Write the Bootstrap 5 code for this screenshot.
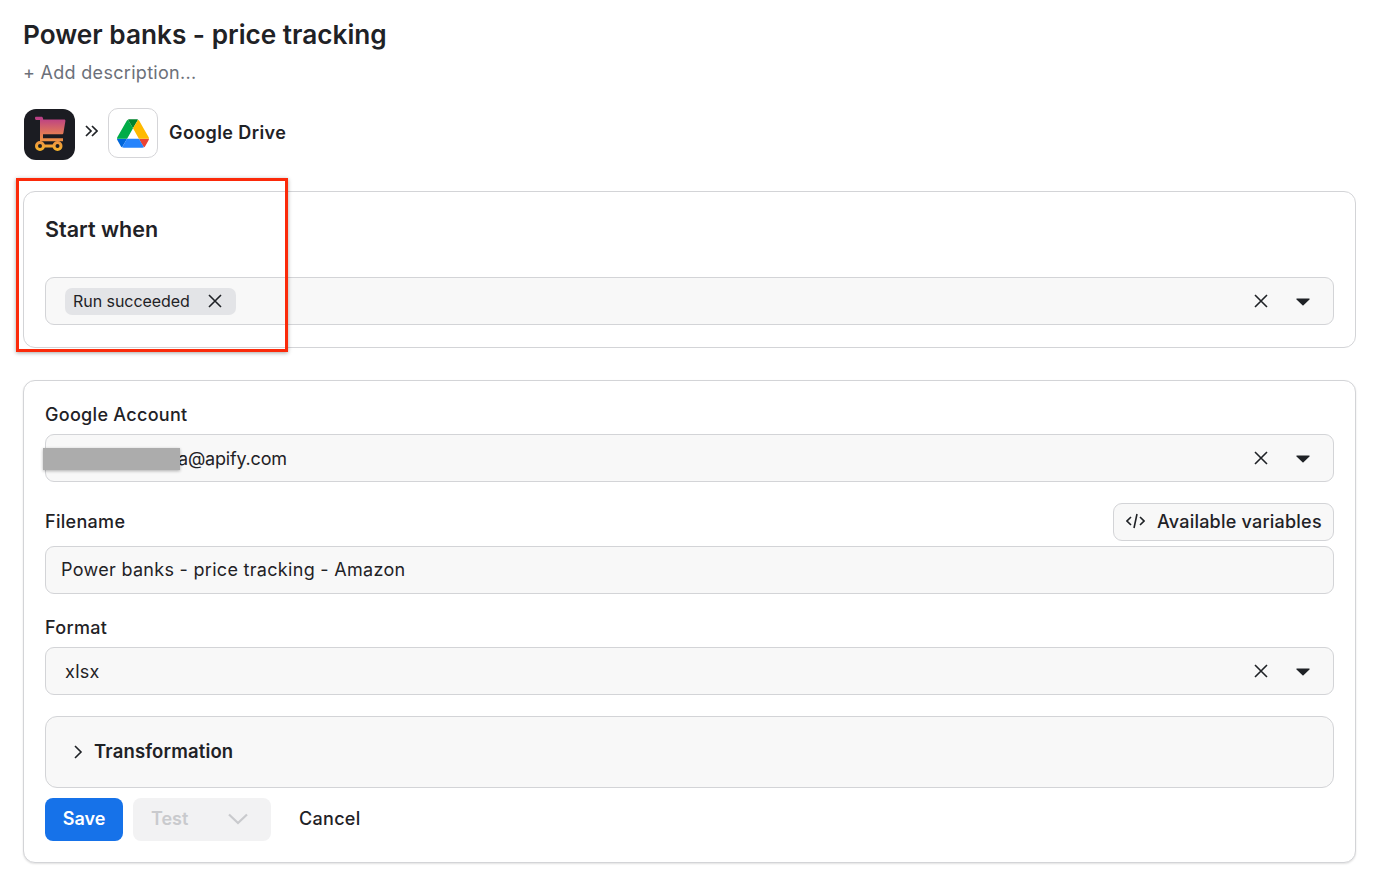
<!DOCTYPE html>
<html lang="en">
<head>
    <meta charset="UTF-8">
    <meta name="viewport" content="width=device-width, initial-scale=1.0">
    <link href="https://cdn.jsdelivr.net/npm/bootstrap@5.3.0/dist/css/bootstrap.min.css" rel="stylesheet">
    <style>
        body {
            font-family: Inter, "Liberation Sans", sans-serif;
            color: #1f2226;
            background: #fff;
        }
        .page-wrap {
            position: relative;
            width: 1378px;
            height: 894px;
            overflow: hidden;
            padding: 0 22px 0 23px;
        }
        .page-title {
            font-size: 26.2px;
            font-weight: 600;
            line-height: 36px;
            margin: 0;
            padding-top: 17px;
        }
        .add-desc {
            font-size: 18px;
            letter-spacing: .3px;
            line-height: 24px;
            color: #6c7079;
            margin-top: 8px;
        }
        .app-row {
            margin-top: 23px;
            height: 52px;
        }
        .app-tile {
            width: 51px;
            height: 51px;
            margin: 1px 0 0 1px;
            border-radius: 12px;
            background: #1b1c22;
        }
        .drive-tile {
            width: 50px;
            height: 50px;
            margin-top: -2px;
            border-radius: 10px;
            border: 1px solid #d5d5d8;
            background: #fff;
        }
        .arrows {
            width: 33px;
            margin-top: -10px;
        }
        .app-name {
            font-size: 18px;
            font-weight: 600;
            letter-spacing: .4px;
            margin: -4px 0 0 11px;
        }
        .form-panel {
            border: 1px solid #d3d4d7;
            border-radius: 12px;
            padding: 0 21px;
            background: #fff;
        }
        .panel-start {
            margin-top: 31px;
            height: 157px;
        }
        .panel-main {
            margin-top: 32px;
            height: 483px;
            box-shadow: 0 1px 2px rgba(0, 0, 0, .12);
        }
        .start-title {
            font-size: 21.5px;
            font-weight: 600;
            line-height: 28px;
            margin: 0;
            padding-top: 23px;
            margin-bottom: 34px;
        }
        .field-box {
            height: 48px;
            border: 1px solid #d3d4d7;
            border-radius: 9px;
            background: #f8f8f8;
            font-size: 18px;
            letter-spacing: .3px;
            padding: 0 23px 0 19px;
        }
        .field-plain {
            padding-left: 15px;
            padding-bottom: 2px;
        }
        .chip-tag {
            height: 27px;
            border-radius: 7px;
            background: #e3e4e7;
            font-size: 16px;
            letter-spacing: -.05px;
            padding: 0 14px 0 8px;
            gap: 18px;
        }
        .account-text {
            margin-left: 113px;
            letter-spacing: -.2px;
        }
        .field-label {
            font-size: 18px;
            font-weight: 500;
            letter-spacing: .3px;
            line-height: 24px;
        }
        .label-account { padding-top: 22px; margin-bottom: 7px; }
        .label-file { height: 38px; margin-top: 21px; margin-bottom: 5px; }
        .label-format { margin-top: 22px; margin-bottom: 7px; }
        .vars-btn {
            height: 38px;
            width: 221px;
            border: 1px solid #d3d4d7;
            border-radius: 9px;
            background: #f8f8f8;
            font-size: 18px;
            font-weight: 500;
            letter-spacing: .22px;
            color: #1f2226;
            padding: 0 0 2px 12px;
            gap: 12px;
        }
        .transform-box {
            height: 72px;
            margin-top: 21px;
            border: 1px solid #d3d4d7;
            border-radius: 12px;
            background: #f8f8f8;
            padding-left: 27px;
            font-size: 18.5px;
            font-weight: 600;
            letter-spacing: .15px;
            gap: 11px;
        }
        .action-row {
            margin-top: 10px;
            gap: 10px;
        }
        .save-btn {
            width: 78px;
            height: 43px;
            border-radius: 8px;
            background: #1672e9;
            border: 0;
            color: #fff;
            font-size: 18px;
            font-weight: 600;
            padding: 0 0 3px;
        }
        .test-btn {
            width: 138px;
            height: 43px;
            border-radius: 8px;
            background: #f2f2f3;
            color: #c9cacd;
            font-size: 18px;
            font-weight: 600;
            padding: 0 23px 2px 18px;
        }
        .cancel-btn {
            font-size: 18px;
            font-weight: 500;
            letter-spacing: .3px;
            color: #1f2226;
            margin-left: 18px;
            padding-bottom: 3px;
        }
        .caret-icon {
            margin-left: 28px;
            margin-top: 2px;
        }
        .red-frame {
            position: absolute;
            left: 16px;
            top: 178px;
            width: 272px;
            height: 174px;
            border: 3px solid #fb2a0a;
            box-shadow: 0 1px 4px rgba(0, 0, 0, .35);
            pointer-events: none;
        }
        .redact-bar {
            position: absolute;
            left: 43px;
            top: 448px;
            width: 137px;
            height: 22px;
            background: #acacac;
            box-shadow: 0 1px 3px rgba(0, 0, 0, .3);
        }
    </style>
</head>
<body>
    <div class="page-wrap">
        <h1 class="page-title">Power banks - price tracking</h1>
        <div class="add-desc">+ Add description...</div>

        <div class="app-row d-flex align-items-center">
            <div class="app-tile">
                <svg width="51" height="51" viewBox="0 0 51 51" class="d-block">
                    <defs>
                        <linearGradient id="cartGrad" gradientUnits="userSpaceOnUse" x1="0" y1="9" x2="0" y2="42">
                            <stop offset="0" stop-color="#bb3f87"/>
                            <stop offset="0.55" stop-color="#e8824f"/>
                            <stop offset="1" stop-color="#f6b52a"/>
                        </linearGradient>
                    </defs>
                    <path d="M11 9c0-.8.5-1.300 1.300-1.300h5c.8 0 1.400.5 1.600 1.300l.3 1.500h21c.8 0 1.300.6 1.200 1.400l-2 12.100c-.1.8-.7 1.300-1.500 1.300H19v4h20v3H16V11h-3.700c-.8 0-1.300-.8-1.300-2z" fill="url(#cartGrad)"/>
                    <circle cx="16" cy="37" r="3.500" fill="none" stroke="url(#cartGrad)" stroke-width="3"/>
                    <circle cx="33.500" cy="37" r="3.500" fill="none" stroke="url(#cartGrad)" stroke-width="3"/>
                    <path d="M20 35.500h10v3H20z" fill="url(#cartGrad)"/>
                </svg>
            </div>
            <div class="arrows text-center">
                <svg width="13" height="12" viewBox="0 0 13 12" fill="none" stroke="#1f2226" stroke-width="1.700">
                    <path d="M1 1l5 5-5 5M7 1l5 5-5 5"/>
                </svg>
            </div>
            <div class="drive-tile d-flex align-items-center justify-content-center">
                <svg width="32" height="29" viewBox="0 0 87.300 78">
                    <path d="m6.600 66.850 3.850 6.650c.8 1.400 1.950 2.500 3.300 3.300l13.750-23.800h-27.500c0 1.550.4 3.100 1.200 4.500z" fill="#0066da"/>
                    <path d="m43.650 25-13.750-23.800c-1.350.8-2.500 1.900-3.300 3.300l-25.400 44a9.060 9.060 0 0 0 -1.200 4.500h27.500z" fill="#00ac47"/>
                    <path d="m73.550 76.800c1.350-.8 2.500-1.900 3.300-3.300l1.600-2.750 7.650-13.250c.8-1.400 1.200-2.950 1.200-4.500h-27.502l5.852 11.500z" fill="#ea4335"/>
                    <path d="m43.650 25 13.750-23.800c-1.350-.8-2.900-1.200-4.500-1.200h-18.500c-1.600 0-3.150.45-4.500 1.200z" fill="#00832d"/>
                    <path d="m59.800 53h-32.300l-13.750 23.800c1.350.8 2.900 1.200 4.500 1.200h50.800c1.600 0 3.150-.45 4.500-1.200z" fill="#2684fc"/>
                    <path d="m73.400 26.500-12.700-22c-.8-1.400-1.950-2.500-3.300-3.300l-13.750 23.800 16.150 28h27.450c0-1.550-.4-3.100-1.200-4.500z" fill="#ffba00"/>
                </svg>
            </div>
            <div class="app-name">Google Drive</div>
        </div>

        <section class="form-panel panel-start">
            <h2 class="start-title">Start when</h2>
            <div class="field-box d-flex align-items-center justify-content-between">
                <div class="chip-tag d-inline-flex align-items-center">
                    <span>Run succeeded</span>
                    <svg width="14" height="14" viewBox="0 0 14 14" stroke="#1f2226" stroke-width="1.600"><path d="M1 1l12 12M13 1L1 13"/></svg>
                </div>
                <div class="d-flex align-items-center field-icons"></div>
            </div>
        </section>

        <section class="form-panel panel-main">
            <div class="field-label label-account">Google Account</div>
            <div class="field-box d-flex align-items-center justify-content-between">
                <span class="account-text">a@apify.com</span>
                <div class="d-flex align-items-center field-icons"></div>
            </div>

            <div class="label-file d-flex align-items-center justify-content-between">
                <div class="field-label">Filename</div>
                <button type="button" class="vars-btn d-flex align-items-center">
                    <svg width="19" height="16" viewBox="0 0 19 16" fill="none" stroke="#1f2226" stroke-width="1.600"><path d="M5 4L1 8l4 4M14 4l4 4-4 4M11 1L8 15"/></svg>
                    <span>Available variables</span>
                </button>
            </div>
            <div class="field-box field-plain d-flex align-items-center">Power banks - price tracking - Amazon</div>

            <div class="field-label label-format">Format</div>
            <div class="field-box d-flex align-items-center justify-content-between">
                <span>xlsx</span>
                <div class="d-flex align-items-center field-icons"></div>
            </div>

            <div class="transform-box d-flex align-items-center">
                <svg width="10" height="14" viewBox="0 0 10 14" fill="none" stroke="#1f2226" stroke-width="1.600"><path d="M2 1l6 6-6 6"/></svg>
                <span>Transformation</span>
            </div>

            <div class="action-row d-flex align-items-center">
                <button type="button" class="save-btn">Save</button>
                <div class="test-btn d-flex align-items-center justify-content-between">
                    <span>Test</span>
                    <svg width="20" height="12" viewBox="0 0 20 12" fill="none" stroke="#c9cacd" stroke-width="2.200"><path d="M1 1.500l9 8.500 9-8.500"/></svg>
                </div>
                <div class="cancel-btn">Cancel</div>
            </div>
        </section>

        <div class="redact-bar"></div>
        <div class="red-frame"></div>
    </div>

    <script src="https://cdn.jsdelivr.net/npm/bootstrap@5.3.0/dist/js/bootstrap.bundle.min.js"></script>
    <script>
        // clear + caret pair is the same on every select
        const iconsHtml = `
            <svg width="14" height="14" viewBox="0 0 14 14" stroke="#1f2226" stroke-width="1.600"><path d="M1 1l12 12M13 1L1 13"/></svg>
            <svg class="caret-icon" width="14" height="8" viewBox="0 0 14 8" fill="#1f2226"><path d="M1 .5h12c.6 0 .9.7.5 1.100L7.500 7.200c-.3.3-.7.3-1 0L.5 1.600C.1 1.200.4.500 1 .5z"/></svg>
        `;
        document.querySelectorAll('.field-icons').forEach(el => {
            el.innerHTML = iconsHtml;
        });
    </script>
</body>
</html>
